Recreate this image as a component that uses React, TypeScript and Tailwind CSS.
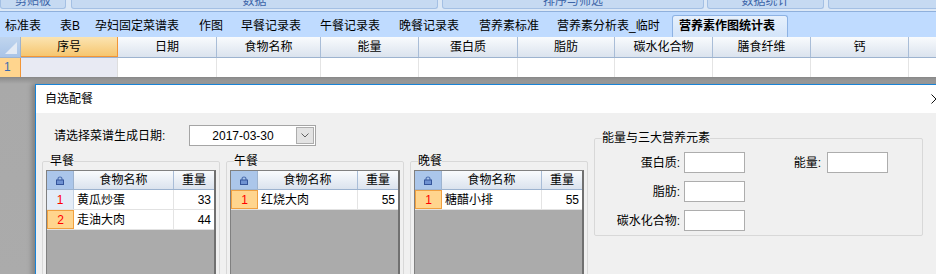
import React from "react";

const groups = [
  { label: "剪贴板", cls: "w-[66px]" },
  { label: "数据", cls: "w-[367px] ml-[5px]" },
  { label: "排序与筛选", cls: "w-[262px] ml-[4px]" },
  { label: "数据统计", cls: "w-[117px] ml-[3px]" },
  { label: "", cls: "w-[120px] ml-[4px]" },
];

const tabs = [
  { label: "标准表", w: "w-[55px]" },
  { label: "表B", w: "w-[35px]" },
  { label: "孕妇固定菜谱表", w: "w-[104px]" },
  { label: "作图", w: "w-[42px]" },
  { label: "早餐记录表", w: "w-[79px]" },
  { label: "午餐记录表", w: "w-[79px]" },
  { label: "晚餐记录表", w: "w-[80px]" },
  { label: "营养素标准", w: "w-[78px]" },
  { label: "营养素分析表_临时", w: "w-[115px]" },
];

const columns = [
  { label: "日期", w: "w-[99px]" },
  { label: "食物名称", w: "w-[104px]" },
  { label: "能量", w: "w-[98px]" },
  { label: "蛋白质", w: "w-[99px]" },
  { label: "脂肪", w: "w-[97px]" },
  { label: "碳水化合物", w: "w-[98px]" },
  { label: "膳食纤维", w: "w-[98px]" },
  { label: "钙", w: "w-[98px]" },
  { label: "", w: "w-[98px]" },
];

const meals = [
  { title: "早餐", active: 1, rows: [["黄瓜炒蛋", "33"], ["走油大肉", "44"]] },
  { title: "午餐", active: 0, rows: [["红烧大肉", "55"]] },
  { title: "晚餐", active: 0, rows: [["糖醋小排", "55"]] },
];

const headCell =
  "flex items-center justify-center bg-gradient-to-b from-[#f9fbfd] to-[#dbe3ee] border-r border-[#a9bdd7]";

function Lock() {
  return (
    <svg width="8" height="9" viewBox="0 0 8 9">
      <path d="M2 4.5V3a2 2 0 0 1 4 0v1.5" fill="none" stroke="#4a6db0" strokeWidth="1.1" />
      <rect x="0.5" y="4" width="7" height="4.5" fill="#6f92d2" stroke="#34549a" strokeWidth="1" />
    </svg>
  );
}

function FoodGrid({ rows, active }: { rows: string[][]; active: number }) {
  return (
    <div className="ml-[3px] mt-px w-[170px] h-[200px] bg-[#ababab] border-l border-t border-[#808080] border-r-2 border-r-[#707070]">
      <div className="flex h-[19px] border-b border-[#9db3cf]">
        <div className="w-[27px] flex items-center justify-center bg-[#abc6ea] border-r border-[#9db3cf]">
          <Lock />
        </div>
        <div className={`w-[100px] ${headCell}`}>食物名称</div>
        <div className={`w-[40px] ${headCell} border-r-0`}>重量</div>
      </div>
      {rows.map(([name, weight], i) => (
        <div key={name} className="flex h-[20px] border-b border-[#e2e2e2] bg-white">
          <div
            className={
              i === active
                ? "w-[27px] flex items-center justify-center text-[#ff0000] bg-[#ffd58e] border border-[#f0a040]"
                : "w-[27px] flex items-center justify-center text-[#ff0000] bg-[#e4ecf7] border-r border-[#c5d3e5]"
            }
          >
            {i + 1}
          </div>
          <div className="w-[100px] flex items-center pl-[3px] border-r border-[#e4e4e4]">{name}</div>
          <div className="w-[40px] flex items-center justify-end pr-[3px]">{weight}</div>
        </div>
      ))}
    </div>
  );
}

export default function App() {
  return (
    <div className="w-[936px] h-[274px] overflow-hidden flex flex-col bg-[#ababab] text-[12px] text-black font-['Liberation_Sans','Noto_Sans_CJK_SC',sans-serif]">
      {/* ribbon group labels */}
      <div className="h-[12px] shrink-0 flex bg-[#dce8f6] border-b border-[#8fb0dc]">
        {groups.map((g, i) => (
          <div
            key={i}
            className={`${g.cls} shrink-0 h-[9px] overflow-hidden rounded-b-[3px] bg-[#c6daf2] border border-t-0 border-[#a4c0e4] text-center text-[#3d65a8] leading-[12px]`}
          >
            <div className="-mt-[5px]">{g.label}</div>
          </div>
        ))}
      </div>

      {/* sheet tabs */}
      <div className="h-[25px] shrink-0 flex items-end pl-[5px] bg-[#bfdbff]">
        {tabs.map((t) => (
          <div key={t.label} className={`${t.w} shrink-0 h-[22px] leading-[22px] whitespace-nowrap`}>
            {t.label}
          </div>
        ))}
        <div className="w-[116px] shrink-0 h-[22px] leading-[21px] pl-[6px] font-bold whitespace-nowrap bg-gradient-to-b from-[#e6f0fc] to-[#d3e4f9] border border-b-0 border-[#8db2e3] rounded-t-[3px]">
          营养素作图统计表
        </div>
      </div>

      {/* spreadsheet header */}
      <div className="h-[21px] shrink-0 flex border-b border-[#9db3cf] bg-white">
        <div className="w-[21px] shrink-0 bg-gradient-to-b from-[#c0d5ee] to-[#a9c4e8] border-r border-[#9db3cf]">
          <svg width="20" height="20" viewBox="0 0 20 20">
            <polygon points="17,5 17,17 5,17" fill="#e4ebf5" />
          </svg>
        </div>
        <div className="w-[97px] shrink-0 flex items-center justify-center bg-gradient-to-b from-[#fbe4b1] to-[#f6c66e] border-r border-[#f29536] border-b border-b-[#f29536]">
          序号
        </div>
        {columns.map((c, i) => (
          <div key={i} className={`${c.w} shrink-0 ${headCell}`}>
            {c.label}
          </div>
        ))}
      </div>

      {/* row 1 */}
      <div className="h-[20px] shrink-0 flex border-b border-[#8a8a8a] bg-white">
        <div className="w-[21px] shrink-0 pl-[4px] leading-[19px] text-[#3b6cb0] bg-[#ffd58e] border-r border-[#f29536]">
          1
        </div>
        <div className="w-[97px] shrink-0 bg-[#e8eaf3] border-r border-[#dedede]" />
        {columns.map((c, i) => (
          <div key={i} className={`${c.w} shrink-0 border-r border-[#e4e4e4]`} />
        ))}
      </div>

      {/* MDI area with dialog */}
      <div className="flex-1 min-h-0 pt-[6px] pl-[35px] bg-[linear-gradient(#8e8e8e,#a9a9a9_6px,#ababab)]">
        <div className="w-[915px] h-[240px] flex flex-col bg-[#f0f0f0] border-t border-l border-[#1883d7] shadow-[-3px_0_5px_rgba(0,0,0,0.25)]">
          <div className="h-[28px] shrink-0 flex items-center justify-between pl-[9px] pr-[9px] bg-white">
            <span>自选配餐</span>
            <svg width="10" height="10" viewBox="0 0 10 10">
              <path d="M0.5 0.5L9.5 9.5M9.5 0.5L0.5 9.5" stroke="#111" strokeWidth="1" />
            </svg>
          </div>

          <div className="flex-1 flex">
            {/* left: date + meals */}
            <div className="w-[552px] shrink-0 pl-[6px]">
              <div className="flex items-center h-[21px] mt-[12px]">
                <span className="w-[147px] shrink-0 pl-[12px]">请选择菜谱生成日期:</span>
                <div className="w-[127px] h-[21px] flex items-center bg-white border border-[#a5a5a5]">
                  <span className="flex-1 text-center">2017-03-30</span>
                  <div className="w-[18px] h-[17px] mr-px flex items-center justify-center bg-[#e3e3e3] border border-[#adadad]">
                    <svg width="8" height="5" viewBox="0 0 8 5">
                      <path d="M0.5 0.5L4 4L7.5 0.5" fill="none" stroke="#606060" strokeWidth="1" />
                    </svg>
                  </div>
                </div>
              </div>

              <div className="flex gap-[6px] mt-[7px]">
                {meals.map((m) => (
                  <fieldset key={m.title} className="w-[178px] h-[140px] shrink-0 border border-[#d8d8d8] rounded-[2px]">
                    <legend className="ml-[7px] leading-[16px]">{m.title}</legend>
                    <FoodGrid rows={m.rows} active={m.active} />
                  </fieldset>
                ))}
              </div>
            </div>

            {/* right: nutrients */}
            <div className="ml-[6px] pt-[17px]">
              <fieldset className="w-[329px] h-[106px] border border-[#d8d8d8] rounded-[2px]">
                <legend className="ml-[7px] leading-[16px]">能量与三大营养元素</legend>
                <div className="flex flex-col gap-[8px] pt-[6px]">
                  <div className="flex items-center h-[21px]">
                    <span className="w-[85px] text-right">蛋白质:</span>
                    <div className="ml-[4px] w-[61px] h-[21px] bg-white border border-[#adadad]" />
                    <span className="w-[76px] text-right">能量:</span>
                    <div className="ml-[6px] w-[61px] h-[21px] bg-white border border-[#adadad]" />
                  </div>
                  <div className="flex items-center h-[21px]">
                    <span className="w-[85px] text-right">脂肪:</span>
                    <div className="ml-[4px] w-[61px] h-[21px] bg-white border border-[#adadad]" />
                  </div>
                  <div className="flex items-center h-[21px]">
                    <span className="w-[85px] text-right">碳水化合物:</span>
                    <div className="ml-[4px] w-[61px] h-[21px] bg-white border border-[#adadad]" />
                  </div>
                </div>
              </fieldset>
            </div>
          </div>
        </div>
      </div>
    </div>
  );
}
